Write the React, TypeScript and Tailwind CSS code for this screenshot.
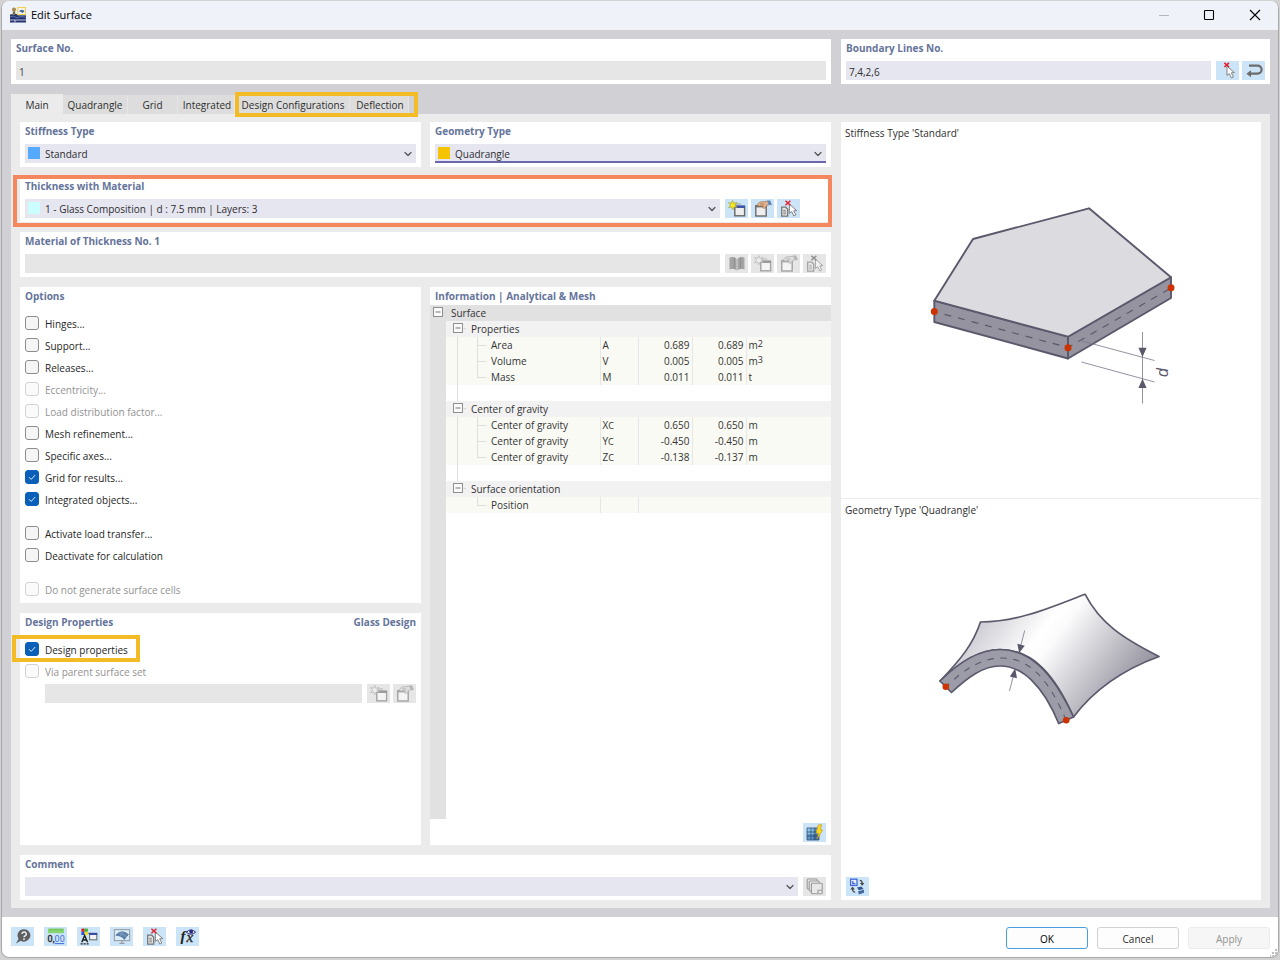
import React, { useId } from "react";
import { ChevronDown } from "lucide-react";

/* ---------- icons ---------- */

type IconProps = { muted?: boolean };

const iconBox = "h-[17px] w-[18px]";

function NewIcon({ muted }: IconProps) {
  const dark = muted ? "#a3a3a3" : "#666666";
  return (
    <svg viewBox="0 0 18 17" className={iconBox} aria-hidden="true">
      <path d="M6 4h7" stroke={muted ? "#b5b5b5" : "#9a9a9a"} strokeWidth="1" />
      <rect x="6.8" y="6.6" width="9.8" height="9.2" fill={muted ? "#f4f4f4" : "#eeeeee"} stroke={dark} strokeWidth="1.4" />
      <rect x="6.6" y="5.4" width="10.4" height="2.6" fill={muted ? "#9a9a9a" : "#3f55a8"} />
      <path
        d="M4.6 0.5 5.8 3.3 9 2.4 7 5.1 9 7.3 6 7 4.8 9.8 3.6 7 0.6 7.6 2.5 5.1 0.5 2.6 3.5 3.3Z"
        fill={muted ? "#ededed" : "#f4ea1f"}
        stroke={muted ? "#b0b0b0" : "#a8a23a"}
        strokeWidth="0.7"
      />
    </svg>
  );
}

function EditIcon({ muted }: IconProps) {
  const dark = muted ? "#a3a3a3" : "#6a6a6a";
  return (
    <svg viewBox="0 0 18 17" className={iconBox} aria-hidden="true">
      <rect x="1.8" y="6" width="10.4" height="10" fill={muted ? "#f4f4f4" : "#eeeeee"} stroke={dark} strokeWidth="1.4" />
      <rect x="1.2" y="5" width="11.6" height="2.4" fill={muted ? "#a8a8a8" : "#75716f"} />
      <path
        d="M3.2 4.6C4.6 2.4 7.2 1.2 9.8 1.6L13.8 1.2 15.4 4.4 12.6 5.8 10.6 8.4 8.8 8 9 6 4.2 6Z"
        fill={muted ? "#dcdcdc" : "#dfb28d"}
        stroke={muted ? "#a6a6a6" : "#9c7558"}
        strokeWidth="0.6"
      />
      <path d="M6 3.8h4M6.8 5h3.6" stroke={muted ? "#a6a6a6" : "#9c7558"} strokeWidth="0.5" />
      <path d="M13 0.6h3.2L17.8 5l-2.6.2Z" fill={muted ? "#b4b4b4" : "#5b88b8"} />
    </svg>
  );
}

function Cursor({ muted }: IconProps) {
  return (
    <path
      d="M8 4.2 8 13.4 10.3 11.6 12.4 16 14.4 15 12.3 10.8 15.4 10.6Z"
      fill={muted ? "#f4f4f4" : "#ffffff"}
      stroke={muted ? "#9f9f9f" : "#777777"}
      strokeWidth="0.9"
    />
  );
}

function SelectInViewIcon({ muted }: IconProps) {
  const dark = muted ? "#a3a3a3" : "#777777";
  return (
    <svg viewBox="0 0 18 17" className={iconBox} aria-hidden="true">
      <path d="M1.7 7.2h4l2 2v6.9h-6Z" fill={muted ? "#ededed" : "#e8e8e8"} stroke={dark} strokeWidth="1.3" />
      <path d="M3.2 10.3h2.6M3.2 12h3M3.2 13.8h3" stroke={dark} strokeWidth="0.9" />
      <g transform="translate(1.4 0)">
        <Cursor muted={muted} />
      </g>
      <path d="M5.4 0.8 10.4 5.2M10.4 0.8 5.4 5.2" stroke={muted ? "#8d8d8d" : "#e3202b"} strokeWidth="1.5" />
    </svg>
  );
}

function PickIcon() {
  return (
    <svg viewBox="0 0 18 17" className={iconBox} aria-hidden="true">
      <Cursor />
      <path d="M5.4 0.8 10 5M10 0.8 5.4 5" stroke="#e3202b" strokeWidth="1.6" />
    </svg>
  );
}

function ReverseIcon() {
  return (
    <svg viewBox="0 0 18 17" className={iconBox} aria-hidden="true">
      <path d="M4 3.6h8.6a3.9 3.9 0 0 1 0 8H4.6" fill="none" stroke="#6b6b6b" strokeWidth="2.2" />
      <path d="M6 8.2 1.4 11.7 6 15.2Z" fill="#6b6b6b" />
    </svg>
  );
}

function LibraryIcon() {
  return (
    <svg viewBox="0 0 18 17" className={iconBox} aria-hidden="true">
      <path d="M1.5 2.6C4 1.6 6.5 2 8.6 3.8V15.4C6.5 13.8 4 13.6 1.5 14.4Z" fill="#a4a4a4" />
      <path d="M16.5 2.6C14 1.6 11.5 2 9.4 3.8V15.4C11.5 13.8 14 13.6 16.5 14.4Z" fill="#a4a4a4" />
      <path d="M6.4 2.5v11M12.6 2.5v11" stroke="#8d8d8d" strokeWidth="1" />
    </svg>
  );
}

function CopyIcon() {
  return (
    <svg viewBox="0 0 18 17" className={iconBox} aria-hidden="true">
      <g fill="#e8e8e8" stroke="#9a9a9a" strokeWidth="1.1">
        <rect x="1.2" y="1" width="10" height="10" rx="1" />
        <rect x="3.2" y="3" width="10" height="10" rx="1" />
        <path d="M6.2 5.2h9.2a.8.8 0 0 1 .8.8v9a.8.8 0 0 1-.8.8H6.2a.8.8 0 0 1-.8-.8V6a.8.8 0 0 1 .8-.8Z" />
        <path d="M12 15.8v-3.6h4" />
      </g>
    </svg>
  );
}

function MeshBoltIcon() {
  return (
    <svg viewBox="0 0 18 17" className={iconBox} aria-hidden="true">
      <rect x="1" y="4" width="12" height="12" fill="#4676a8" />
      <rect x="1" y="4" width="6" height="6" fill="#8fc6e8" />
      <rect x="7" y="4" width="6" height="6" fill="#6ba3cf" />
      <rect x="1" y="10" width="6" height="6" fill="#6396c2" />
      <path d="M1 4h12v12H1ZM5 4v12M9 4v12M1 8h12M1 12h12" fill="none" stroke="#2c4d74" strokeWidth="0.8" />
      <path d="M12.4 1 15.6 0.6 14.4 5.4 16.6 6 11.2 15 12.4 9.4 10 8.8Z" fill="#ffd91f" stroke="#c19105" strokeWidth="0.6" />
    </svg>
  );
}

function SwitchViewIcon() {
  return (
    <svg viewBox="0 0 18 17" className={iconBox} aria-hidden="true">
      <rect x="1.6" y="1.2" width="6.4" height="6.2" fill="#e6edff" stroke="#4568d8" strokeWidth="1.3" />
      <path d="M3.8 3v2.6h2.6" fill="none" stroke="#4568d8" strokeWidth="1.3" />
      <path d="M10.8 2.4q2.4 0 2.4 3M3.6 10.8q0 3.4 2.6 3.4" fill="none" stroke="#454545" strokeWidth="1.2" />
      <path d="M11 5h4.4L13.2 7.8ZM1.4 11.4h4.4L3.6 8.6Z" fill="#454545" />
      <path d="M8 9.4 12.4 8.4 14.6 11 9.8 12.2Z" fill="#35588f" />
      <path d="M9 13.2 15 11.8v3L9.8 16.4Z" fill="#45699f" />
    </svg>
  );
}

function HelpIcon() {
  return (
    <svg viewBox="0 0 18 17" className={iconBox} aria-hidden="true">
      <path d="M10 1.2a6.4 6.2 0 1 1-3.2 11.6L2 15.4 4.6 10.8A6.4 6.2 0 0 1 10 1.2Z" fill="#5f5f5f" />
      <path d="M7.9 6a2.2 2.1 0 1 1 3 2c-.7.3-.9.7-.9 1.3" fill="none" stroke="#e6f1fa" strokeWidth="1.4" />
      <circle cx="10" cy="11.2" r="0.9" fill="#e6f1fa" />
    </svg>
  );
}

function UnitsIcon() {
  return (
    <svg viewBox="0 0 18 17" className={iconBox} aria-hidden="true">
      <rect x="1" y="0.6" width="16" height="4.6" fill="#86d672" />
      <path d="M3 .6v2M5 .6v2M7 .6v2M9 .6v2M11 .6v2M13 .6v2M15 .6v2" stroke="#5cae4b" strokeWidth="0.7" />
      <text x="0.6" y="14" fontFamily="Roboto, sans-serif" fontSize="9" fill="#222222" stroke="#222222" strokeWidth="0.3">0,</text>
      <text x="7.6" y="14" fontFamily="Roboto, sans-serif" fontSize="9" fill="#3f6fd8">00</text>
      <path d="M7.6 15.6h9.6" stroke="#3f6fd8" strokeWidth="1" />
    </svg>
  );
}

function DisplayIcon() {
  return (
    <svg viewBox="0 0 18 17" className={iconBox} aria-hidden="true">
      <rect x="1.4" y="0.6" width="3.2" height="3.2" fill="#e02020" />
      <rect x="4.6" y="0.6" width="3.2" height="3.2" fill="#31b531" />
      <rect x="1.4" y="3.8" width="3.2" height="3.2" fill="#2c4fe0" />
      <rect x="4.6" y="3.8" width="3.2" height="3.2" fill="#f2dc1c" />
      <path d="M1.8 14.2 4.6 7.6 7.6 14.2M2.8 12h3.8" fill="none" stroke="#1e1e1e" strokeWidth="1.4" />
      <path d="M0.6 15.8h8.6" stroke="#1e1e1e" strokeWidth="1.2" strokeDasharray="2 1" />
      <path d="M8 5.4h3" stroke="#555" strokeWidth="0.8" />
      <rect x="9.6" y="5.6" width="7.2" height="6.2" fill="#f2f2f2" stroke="#666" strokeWidth="1" />
      <rect x="9.2" y="4.8" width="8" height="2.2" fill="#3a4aa6" />
    </svg>
  );
}

function MonitorIcon() {
  return (
    <svg viewBox="0 0 18 17" className={iconBox} aria-hidden="true">
      <rect x="1.4" y="1.6" width="15.2" height="11" fill="#d9ecf9" stroke="#9a9fa5" strokeWidth="1.1" />
      <path d="M2.8 7.2Q8.6.8 15.4 6.4L11.2 11.6Q9.6 7.8 2.8 7.2Z" fill="#5f83ab" stroke="#43658d" strokeWidth="0.6" />
      <path d="M6 5Q10.5 5.8 13.6 8.8M9.4 3.6Q8.4 6 7.6 7.8" fill="none" stroke="#9fbad6" strokeWidth="0.5" />
      <path d="M9 12.8v2M6.4 15.4h5.2" stroke="#9a9fa5" strokeWidth="1.3" />
    </svg>
  );
}

function FormulaIcon() {
  return (
    <svg viewBox="0 0 18 17" className={iconBox} aria-hidden="true">
      <text x="1.6" y="13" fontFamily="Liberation Serif, serif" fontStyle="italic" fontWeight="700" fontSize="15" fill="#222">f</text>
      <text x="7.4" y="14" fontFamily="Liberation Serif, serif" fontStyle="italic" fontSize="15" fill="#222" stroke="#222" strokeWidth="0.3">x</text>
      <path d="M7.4 4.2Q12 -.4 16.6 4.2 12 8.2 7.4 4.2Z" fill="#e9edff" stroke="#2b2b6b" strokeWidth="1" />
      <circle cx="12.2" cy="3.7" r="1.9" fill="#2b2b7b" />
    </svg>
  );
}

function AppLogo() {
  return (
    <svg viewBox="0 0 16 16" className="size-4" aria-hidden="true">
      <path d="M0 7.6 6 6.8 8 8.2H16V15.4H0Z" fill="#22336f" />
      <path d="M0 13h16M5 13v2.4" stroke="#e8ecf6" strokeWidth="0.8" />
      <path d="M0 10 3 9 7 10.8 11 9.4 16 10.4" stroke="#7a89c0" strokeWidth="0.7" fill="none" />
      <circle cx="4" cy="2.6" r="2" fill="#a98a4b" />
      <path d="M2.8 4.2h2.4V8H2.8Z" fill="#7d6f48" />
      <rect x="7.8" y="0.6" width="7.6" height="7" fill="#f5f8ff" stroke="#f0d04a" strokeWidth="1.1" />
      <path d="M8.8 4.2Q11.4 1.2 14.6 4L12.6 6.2Q11.4 4.8 8.8 4.2Z" fill="#4d6d98" />
    </svg>
  );
}

/* ---------- controls ---------- */

function IconButton({ label, muted, children }: { label: string; muted?: boolean; children: React.ReactNode }) {
  return (
    <button
      type="button"
      aria-label={label}
      disabled={muted}
      className={
        "flex h-[19px] w-[23px] shrink-0 items-center justify-center " + (muted ? "bg-[#e6e6e6]" : "bg-[#cce4f7]")
      }
    >
      {children}
    </button>
  );
}

function PanelTitle({ htmlFor, children }: { htmlFor?: string; children: React.ReactNode }) {
  const style = "block text-[10px] leading-[18px] font-bold text-[#65749a]";
  return htmlFor ? (
    <label htmlFor={htmlFor} className={style}>
      {children}
    </label>
  ) : (
    <h2 className={style}>{children}</h2>
  );
}

function FieldPanel({
  title,
  id,
  children,
  highlight,
}: {
  title: string;
  id: string;
  children: React.ReactNode;
  highlight?: boolean;
}) {
  return (
    <section className="relative bg-white px-[5px] pb-1">
      <div className="pb-1">
        <PanelTitle htmlFor={id}>{title}</PanelTitle>
      </div>
      <div className="flex items-center">{children}</div>
      {highlight && (
        <div className="pointer-events-none absolute -top-0.5 -right-px -bottom-[5px] -left-[7px] z-10 border-4 border-[#f5875f]" />
      )}
    </section>
  );
}

function Dropdown({ id, value, swatch, focused }: { id: string; value: string; swatch?: string; focused?: boolean }) {
  return (
    <div className="relative min-w-0 flex-1">
      {swatch && <span className={"pointer-events-none absolute top-[3px] left-[3px] size-3 " + swatch} />}
      <select
        id={id}
        defaultValue={value}
        className={
          "block h-[19px] w-full appearance-none bg-[#e6e6f1] pt-px pl-5 text-[10px] leading-4 text-[#2d2d2d] outline-none " +
          (focused ? "shadow-[inset_0_-2px_0_#6a68ae]" : "")
        }
      >
        <option>{value}</option>
      </select>
      <ChevronDown className="pointer-events-none absolute top-1 right-0.5 size-3 text-[#555555]" strokeWidth={2.5} />
    </div>
  );
}

function Check({ label, checked, disabled }: { label: string; checked?: boolean; disabled?: boolean }) {
  const id = useId();
  return (
    <div className="flex h-[22px] items-center gap-1.5">
      <span className="grid size-[14px] shrink-0">
        <input
          id={id}
          type="checkbox"
          defaultChecked={checked}
          disabled={disabled}
          className="peer size-[14px] appearance-none rounded-[3px] border border-[#8c8c8c] bg-[#f5f5f5] [grid-area:1/1] checked:border-[#0a5fb8] checked:bg-[#0a5fb8] disabled:border-[#d2d2d2] disabled:bg-[#fafafa]"
        />
        <svg
          viewBox="0 0 14 14"
          className="pointer-events-none invisible size-[14px] [grid-area:1/1] peer-checked:visible"
          aria-hidden="true"
        >
          <path d="M4 7.2 6.2 9.4 10.2 5" fill="none" stroke="#dbe9f7" strokeWidth="1" />
        </svg>
      </span>
      <label htmlFor={id} className={"pt-0.5 text-[10px] leading-4 " + (disabled ? "text-[#929292]" : "text-[#262626]")}>
        {label}
      </label>
    </div>
  );
}

/* ---------- information tree ---------- */

function Expander() {
  return (
    <svg viewBox="0 0 16 16" className="size-4 shrink-0" aria-hidden="true">
      <rect x="3.5" y="2.5" width="9" height="9" fill="#fafafa" stroke="#8f8f8f" />
      <path d="M5.5 7h5" stroke="#777777" />
      <path d="M13.5 7.5H16" stroke="#d8d8d8" />
    </svg>
  );
}

function Branch({ last, trunk }: { last?: boolean; trunk?: boolean }) {
  return (
    <svg viewBox="0 0 44 16" className="h-4 w-11 shrink-0" aria-hidden="true">
      {trunk && <path d="M11.5 0v16" stroke="#dedede" />}
      <path d={last ? "M31.5 0v8.5h9" : "M31.5 0v16M31.5 8.5h9"} fill="none" stroke="#dedede" />
    </svg>
  );
}

type Leaf = { name: string; sym?: React.ReactNode; a?: string; b?: string; unit?: React.ReactNode };

const sup = (n: string) => (
  <>
    m<span className="relative -top-0.5 text-[9px]">{n}</span>
  </>
);
const sub = (s: string) => (
  <>
    {s}
    <span className="text-[9px]">C</span>
  </>
);

const groups: { name: string; rows: Leaf[] }[] = [
  {
    name: "Properties",
    rows: [
      { name: "Area", sym: "A", a: "0.689", b: "0.689", unit: sup("2") },
      { name: "Volume", sym: "V", a: "0.005", b: "0.005", unit: sup("3") },
      { name: "Mass", sym: "M", a: "0.011", b: "0.011", unit: "t" },
    ],
  },
  {
    name: "Center of gravity",
    rows: [
      { name: "Center of gravity", sym: sub("X"), a: "0.650", b: "0.650", unit: "m" },
      { name: "Center of gravity", sym: sub("Y"), a: "-0.450", b: "-0.450", unit: "m" },
      { name: "Center of gravity", sym: sub("Z"), a: "-0.138", b: "-0.137", unit: "m" },
    ],
  },
  { name: "Surface orientation", rows: [{ name: "Position" }] },
];

function InfoTable() {
  const line = "border-l border-[#e6e6e6] p-0";
  return (
    <table className="w-full table-fixed border-collapse text-[10px] leading-4 text-[#333333]">
      <colgroup>
        <col className="w-4" />
        <col className="w-[154px]" />
        <col className="w-[38px]" />
        <col className="w-[54px]" />
        <col className="w-[54px]" />
        <col />
      </colgroup>
      <tbody>
        <tr className="h-4 bg-[#e1e1e1]">
          <td className="p-0">
            <Expander />
          </td>
          <td colSpan={5} className="p-0 pl-[5px]">
            Surface
          </td>
        </tr>
        {groups.map((g, gi) => {
          const isLast = gi === groups.length - 1;
          return (
            <React.Fragment key={g.name}>
              <tr className="h-4 bg-[#f2f2f2]">
                <td className="bg-[#e1e1e1] p-0" />
                <td colSpan={5} className="p-0">
                  <div className="flex h-4 items-center gap-[5px] pl-1">
                    <Expander />
                    <span>{g.name}</span>
                  </div>
                </td>
              </tr>
              {g.rows.map((r, ri) => (
                <tr key={ri} className="h-4 bg-[#f9faf4]">
                  <td className="bg-[#e1e1e1] p-0" />
                  <td className="p-0">
                    <div className="flex h-4 items-center">
                      <Branch trunk={!isLast} last={ri === g.rows.length - 1} />
                      <span className="pl-px whitespace-nowrap">{r.name}</span>
                    </div>
                  </td>
                  <td className={line}>
                    <div className="h-4 pl-0.5">{r.sym}</div>
                  </td>
                  <td className={line}>
                    <div className="h-4 pr-0.5 text-right">{r.a}</div>
                  </td>
                  <td className={r.a ? line : "p-0"}>
                    <div className="h-4 pr-0.5 text-right">{r.b}</div>
                  </td>
                  <td className={r.a ? line : "p-0"}>
                    <div className="h-4 pl-0.5">{r.unit}</div>
                  </td>
                </tr>
              ))}
              {!isLast && (
                <tr className="h-4">
                  <td className="bg-[#e1e1e1] p-0" />
                  <td colSpan={5} className="p-0">
                    <svg viewBox="0 0 44 16" className="block h-4 w-11" aria-hidden="true">
                      <path d="M11.5 0v16" stroke="#dedede" />
                    </svg>
                  </td>
                </tr>
              )}
            </React.Fragment>
          );
        })}
      </tbody>
    </table>
  );
}

/* ---------- drawings ---------- */

function SlabDrawing() {
  return (
    <svg viewBox="1 0 300 260" className="h-[260px] w-[300px]" role="img" aria-label="Surface with thickness d">
      <g stroke="#5a596c" strokeWidth="1.9" strokeLinejoin="round">
        <path d="M34.3 110.7 168 146.7V168.5L34.3 132Z" fill="#94939f" />
        <path d="M168 146.7 271 87.3V108L168 168.5Z" fill="#94939f" />
        <path d="M34.3 110.7 73 49 189 18.3 271 87.3 168 146.7Z" fill="#dbdbe0" />
      </g>
      <path d="M44.5 124.3 168 157.5" stroke="#5a596c" strokeWidth="1.2" strokeDasharray="7 7" />
      <path d="M168 157.5 271 98" stroke="#5a596c" strokeWidth="1.2" strokeDasharray="7 7" strokeDashoffset="2" />
      <g fill="#cc3300">
        <circle cx="34.3" cy="121.5" r="3.5" />
        <circle cx="168" cy="157.8" r="3.5" />
        <circle cx="271" cy="97.8" r="3.5" />
      </g>
      <path d="M242.5 142v71.5M180 150.5 254.5 170.5M181.5 172 254.5 192" stroke="#77768a" strokeWidth="0.8" />
      <path d="M238.4 157.7h8.2L242.5 167ZM238.4 198h8.2L242.5 188.7Z" fill="#5a596c" />
      <text transform="translate(267.5 187) rotate(-90)" fontFamily="Liberation Sans, sans-serif" fontStyle="italic" fontSize="16" fill="#5a596c">
        d
      </text>
    </svg>
  );
}

function VaultDrawing() {
  return (
    <svg viewBox="1 0 300 255" className="h-[255px] w-[300px]" role="img" aria-label="Curved quadrangle surface">
      <defs>
        <linearGradient id="vault" gradientUnits="userSpaceOnUse" x1="68" y1="30" x2="218" y2="140">
          <stop offset="0" stopColor="#b9b8c2" />
          <stop offset="0.42" stopColor="#ffffff" />
          <stop offset="0.5" stopColor="#fbfbfc" />
          <stop offset="1" stopColor="#94939f" />
        </linearGradient>
      </defs>
      <g stroke="#5a596c" strokeWidth="1.7" strokeLinejoin="round">
        <path
          d="M40 111C62 88 73 74 80.5 52 118 51.5 147 39 185 24.2 200 53 222 68 259 86.5 222 100 193 121 173.5 147 155 105 133 79.5 100 79.5 80 79.5 60 92 40 111Z"
          fill="url(#vault)"
        />
        <path
          d="M40 111C60 91 80 79.5 100 79.5 127 79.5 151 98 173.5 147L158.7 153.5C143 115 122 96 100 96 83 96 68 107 51.5 122.5Z"
          fill="#9c9ba8"
        />
      </g>
      <path d="M46 117C64 99 82 88 102 88 127 88 147 105 166 150" fill="none" stroke="#5a596c" strokeWidth="1.1" strokeDasharray="6.5 6.5" strokeDashoffset="2" />
      <circle cx="45.8" cy="116.8" r="3.3" fill="#cc3300" />
      <circle cx="166.2" cy="150.2" r="3.3" fill="#cc3300" />
      <path d="M124.7 60.5 120.7 76M109.5 121 113.6 105" stroke="#77768a" strokeWidth="0.8" />
      <path d="M117.3 73.8 124.7 75.7 119.2 83ZM109.8 106.4 117 108.2 115.2 98.6Z" fill="#5a596c" />
    </svg>
  );
}

/* ---------- page ---------- */

const tabStyle = "flex h-[19px] items-center justify-center border-r border-[#e6e6e6] bg-[#dddddd] pt-px";

export default function App() {
  return (
    <div className="flex min-h-screen flex-col bg-[#d2d2d2] px-px pt-px pb-0.5 font-['Open_Sans','Noto_Sans',sans-serif] text-[10px] leading-4 text-[#2d2d2d]">
      <main className="relative flex flex-1 flex-col overflow-hidden rounded-lg border border-t-0 border-[#a9a9a9] bg-white">
        <header className="flex h-[29px] items-center bg-[#eff3f9] pb-0.5 pl-2">
          <AppLogo />
          <h1 className="flex-1 pl-[5px] text-[11px] leading-4 text-black">Edit Surface</h1>
          <div className="flex items-center gap-[31px] pr-[15px]">
            <button type="button" aria-label="Minimize" disabled>
              <svg viewBox="0 0 14 14" className="size-[14px]" aria-hidden="true">
                <path d="M2 7.5h10" stroke="#b4b7bc" />
              </svg>
            </button>
            <button type="button" aria-label="Maximize">
              <svg viewBox="0 0 14 14" className="size-[14px]" aria-hidden="true">
                <rect x="2.5" y="2.5" width="9" height="9" rx="0.8" fill="none" stroke="#000" strokeWidth="1.1" />
              </svg>
            </button>
            <button type="button" aria-label="Close">
              <svg viewBox="0 0 16 14" className="h-[14px] w-4" aria-hidden="true">
                <path d="M3 2 13 12M13 2 3 12" stroke="#000" strokeWidth="1.1" />
              </svg>
            </button>
          </div>
        </header>

        <div className="flex flex-1 flex-col bg-[#d1d0d5] py-[9px] pr-2 pl-[9px]">
          <div className="grid grid-cols-[820fr_429fr] gap-2.5">
            <FieldPanel title="Surface No." id="surface-no">
              <input
                id="surface-no"
                readOnly
                defaultValue="1"
                className="h-[19px] w-full bg-[#e6e6e6] px-[3px] pt-0.5 text-[10px] text-[#444444] outline-none"
              />
            </FieldPanel>
            <FieldPanel title="Boundary Lines No." id="boundary-lines">
              <input
                id="boundary-lines"
                defaultValue="7,4,2,6"
                className="mr-[5px] h-[19px] min-w-0 flex-1 bg-[#e6e6f1] px-[3px] pt-0.5 text-[10px] outline-none"
              />
              <div className="flex gap-[3px]">
                <IconButton label="Select lines">
                  <PickIcon />
                </IconButton>
                <IconButton label="Reverse orientation">
                  <ReverseIcon />
                </IconButton>
              </div>
            </FieldPanel>
          </div>

          <div role="tablist" className="flex items-end pt-2.5">
            <button type="button" role="tab" aria-selected="true" className="flex h-5 w-[52px] items-center justify-center bg-[#ebebeb] pt-0.5">
              Main
            </button>
            <button type="button" role="tab" className={tabStyle + " w-[65px]"}>Quadrangle</button>
            <button type="button" role="tab" className={tabStyle + " w-[50px]"}>Grid</button>
            <button type="button" role="tab" className={tabStyle + " w-[57px] pl-0.5"}>Integrated</button>
            <div className="relative flex">
              <button type="button" role="tab" className={tabStyle + " w-[115px] pl-0.5"}>Design Configurations</button>
              <button type="button" role="tab" className={tabStyle + " w-[59px] pl-0.5"}>Deflection</button>
              <div className="pointer-events-none absolute -top-[3px] -right-[9px] -bottom-[3px] left-0 z-10 border-4 border-[#f3bc27]" />
            </div>
          </div>

          <div className="grid flex-1 grid-cols-[811fr_420fr] gap-2.5 bg-[#ebebeb] px-[9px] py-2">
            <div className="flex min-w-0 flex-col gap-2.5">
              <div className="grid grid-cols-2 gap-[9px]">
                <FieldPanel title="Stiffness Type" id="stiffness">
                  <Dropdown id="stiffness" value="Standard" swatch="bg-[#55aaff]" />
                </FieldPanel>
                <FieldPanel title="Geometry Type" id="geometry">
                  <Dropdown id="geometry" value="Quadrangle" swatch="bg-[#f5c400]" focused />
                </FieldPanel>
              </div>

              <FieldPanel title="Thickness with Material" id="thickness" highlight>
                <Dropdown id="thickness" value="1 - Glass Composition | d : 7.5 mm | Layers: 3" swatch="bg-[#ccffff]" />
                <div className="flex gap-[3px] pr-[26px] pl-[5px]">
                  <IconButton label="New thickness">
                    <NewIcon />
                  </IconButton>
                  <IconButton label="Edit thickness">
                    <EditIcon />
                  </IconButton>
                  <IconButton label="Select thickness">
                    <SelectInViewIcon />
                  </IconButton>
                </div>
              </FieldPanel>

              <FieldPanel title="Material of Thickness No. 1" id="material">
                <input id="material" disabled className="h-[19px] min-w-0 flex-1 bg-[#e6e6e6]" />
                <div className="flex gap-[3px] pl-[5px]">
                  <IconButton label="Material library" muted>
                    <LibraryIcon />
                  </IconButton>
                  <IconButton label="New material" muted>
                    <NewIcon muted />
                  </IconButton>
                  <IconButton label="Edit material" muted>
                    <EditIcon muted />
                  </IconButton>
                  <IconButton label="Select material" muted>
                    <SelectInViewIcon muted />
                  </IconButton>
                </div>
              </FieldPanel>

              <div className="grid flex-1 grid-cols-2 gap-[9px]">
                <div className="flex min-w-0 flex-col gap-2.5">
                  <section className="bg-white px-[5px] pb-[3px]">
                    <PanelTitle>Options</PanelTitle>
                    <div className="flex flex-col gap-3 pt-[7px]">
                      <div>
                        <Check label="Hinges..." />
                        <Check label="Support..." />
                        <Check label="Releases..." />
                        <Check label="Eccentricity..." disabled />
                        <Check label="Load distribution factor..." disabled />
                        <Check label="Mesh refinement..." />
                        <Check label="Specific axes..." />
                        <Check label="Grid for results..." checked />
                        <Check label="Integrated objects..." checked />
                      </div>
                      <div>
                        <Check label="Activate load transfer..." />
                        <Check label="Deactivate for calculation" />
                      </div>
                      <Check label="Do not generate surface cells" disabled />
                    </div>
                  </section>

                  <section className="flex-1 bg-white px-[5px]">
                    <div className="flex justify-between pb-[7px]">
                      <PanelTitle>Design Properties</PanelTitle>
                      <PanelTitle>Glass Design</PanelTitle>
                    </div>
                    <div className="relative">
                      <Check label="Design properties" checked />
                      <div className="pointer-events-none absolute -top-[3px] -left-[13px] h-[27px] w-32 border-4 border-[#f3bc27]" />
                    </div>
                    <Check label="Via parent surface set" disabled />
                    <div className="flex pt-0.5 pl-5">
                      <input aria-label="Parent surface set" disabled className="h-[19px] min-w-0 flex-1 bg-[#e6e6e6]" />
                      <div className="flex gap-[3px] pl-[5px]">
                        <IconButton label="New surface set" muted>
                          <NewIcon muted />
                        </IconButton>
                        <IconButton label="Edit surface set" muted>
                          <EditIcon muted />
                        </IconButton>
                      </div>
                    </div>
                  </section>
                </div>

                <section className="flex min-w-0 flex-col bg-white">
                  <div className="px-[5px]">
                    <PanelTitle>Information | Analytical &amp; Mesh</PanelTitle>
                  </div>
                  <InfoTable />
                  <div className="w-4 flex-1 bg-[#e1e1e1]" />
                  <div className="flex justify-end px-[5px] pt-1 pb-[3px]">
                    <IconButton label="Calculate mesh information">
                      <MeshBoltIcon />
                    </IconButton>
                  </div>
                </section>
              </div>

              <FieldPanel title="Comment" id="comment">
                <Dropdown id="comment" value="" />
                <div className="pl-[5px]">
                  <IconButton label="Comment templates" muted>
                    <CopyIcon />
                  </IconButton>
                </div>
              </FieldPanel>
            </div>

            <aside className="flex min-w-0 flex-col bg-white">
              <figure className="flex flex-1 flex-col border-b border-[#ebebeb]">
                <figcaption className="px-1 leading-[22px]">Stiffness Type 'Standard'</figcaption>
                <div className="flex flex-1 items-center justify-center pb-0.5">
                  <SlabDrawing />
                </div>
              </figure>
              <figure className="flex flex-1 flex-col">
                <figcaption className="px-1 leading-[22px]">Geometry Type 'Quadrangle'</figcaption>
                <div className="flex flex-1 items-center justify-center pb-0.5">
                  <VaultDrawing />
                </div>
              </figure>
              <div className="px-[5px] pt-0.5 pb-1">
                <IconButton label="Switch picture">
                  <SwitchViewIcon />
                </IconButton>
              </div>
            </aside>
          </div>
        </div>

        <footer className="flex h-10 items-center justify-between pr-2 pb-px pl-[9px]">
          <div className="flex gap-2.5">
            <IconButton label="Help">
              <HelpIcon />
            </IconButton>
            <IconButton label="Units and decimal places">
              <UnitsIcon />
            </IconButton>
            <IconButton label="Display properties">
              <DisplayIcon />
            </IconButton>
            <IconButton label="View">
              <MonitorIcon />
            </IconButton>
            <IconButton label="Select in model">
              <SelectInViewIcon />
            </IconButton>
            <IconButton label="Formula">
              <FormulaIcon />
            </IconButton>
          </div>
          <div className="flex gap-[9px] pt-[3px]">
            <button type="button" className="h-[22px] w-[82px] rounded-[3px] border border-[#4a9fe0] bg-[#fdfdfd] pt-px text-black">
              OK
            </button>
            <button type="button" className="h-[22px] w-[82px] rounded-[3px] border border-[#d2d2d2] bg-[#fdfdfd] pt-px">
              Cancel
            </button>
            <button type="button" disabled className="h-[22px] w-[82px] rounded-[3px] border border-[#ececec] bg-[#f6f6f6] pt-px text-[#929292]">
              Apply
            </button>
          </div>
        </footer>
        <svg viewBox="0 0 8 8" className="pointer-events-none absolute right-0 bottom-0 size-2" aria-hidden="true">
          <path d="M5 0h2v2H5ZM5 3h2v2H5ZM2 3h2v2H2ZM2 6h2v2H2ZM5 6h1v1H5ZM-1 6h2v2h-2Z" fill="#bdbdbd" />
        </svg>
      </main>
    </div>
  );
}
